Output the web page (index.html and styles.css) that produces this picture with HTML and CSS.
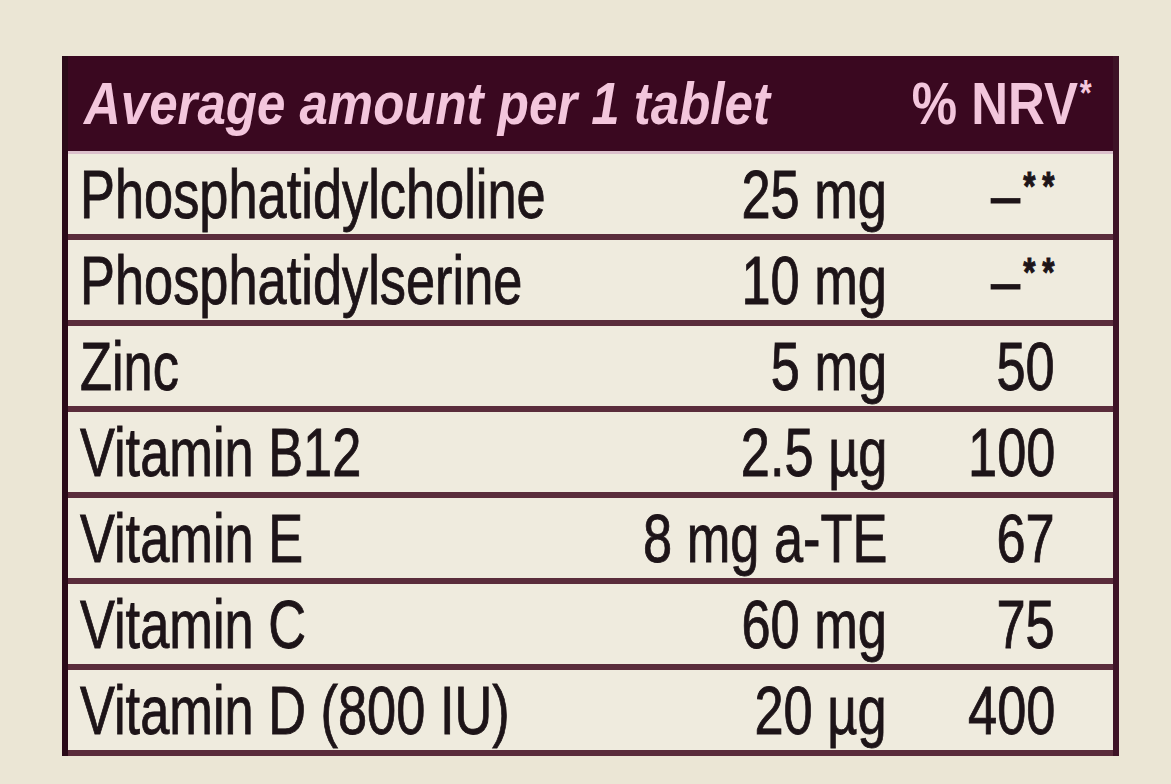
FILE: index.html
```html
<!DOCTYPE html>
<html lang="en">
<head>
  <meta charset="UTF-8">
  <meta name="viewport" content="width=device-width, initial-scale=1.0">
  <title>Nutrition Table</title>
  <link rel="stylesheet" href="styles.css">
</head>
<body>

  <div class="nutri-table">
    <div class="nutri-head">
      <span class="head-title">Average amount per 1 tablet</span>
      <span class="head-nrv">% NRV<sup>*</sup></span>
    </div>

    <div class="nutri-row">
      <span class="name">Phosphatidylcholine</span>
      <span class="amount">25 mg</span>
      <span class="nrv">–<sup>**</sup></span>
    </div>
    <div class="nutri-row">
      <span class="name">Phosphatidylserine</span>
      <span class="amount">10 mg</span>
      <span class="nrv">–<sup>**</sup></span>
    </div>
    <div class="nutri-row">
      <span class="name">Zinc</span>
      <span class="amount">5 mg</span>
      <span class="nrv">50</span>
    </div>
    <div class="nutri-row">
      <span class="name">Vitamin B12</span>
      <span class="amount">2.5 µg</span>
      <span class="nrv">100</span>
    </div>
    <div class="nutri-row">
      <span class="name">Vitamin E</span>
      <span class="amount">8 mg a-TE</span>
      <span class="nrv">67</span>
    </div>
    <div class="nutri-row">
      <span class="name">Vitamin C</span>
      <span class="amount">60 mg</span>
      <span class="nrv">75</span>
    </div>
    <div class="nutri-row">
      <span class="name">Vitamin D (800 IU)</span>
      <span class="amount">20 µg</span>
      <span class="nrv">400</span>
    </div>
  </div>

</body>
</html>
```

FILE: styles.css
```css
body {
  margin: 0;
  background-color: #ebe6d5;
  font-family: "Liberation Sans", Arial, sans-serif;
  color: #1d1418;
}

.nutri-table {
  width: 1045px;
  margin: 56px 0 0 62px;
  border-left: 6px solid #2a0a18;
  border-right: 6px solid #3e1326;
  background-color: #efebde;
}

/* header bar */
.nutri-head {
  height: 95px;
  background-color: #3a0820;
  border-bottom: 3px solid #dcc0cc;
  display: grid;
  grid-template-columns: minmax(0, 1fr) auto;
  align-items: center;
  padding: 0 21px 0 16px;
  color: #f3c6dc;
  font-weight: bold;
  font-size: 60px;
  line-height: 1;
  white-space: nowrap;
}

.head-title {
  display: inline-block;
  font-style: italic;
  transform: scaleX(0.85);
  transform-origin: left center;
  justify-self: start;
}

.head-nrv {
  display: inline-block;
  transform: scaleX(0.85);
  transform-origin: right center;
  justify-self: end;
}

.head-nrv sup {
  font-size: 0.6em;
  vertical-align: 0.5em;
  margin-left: 2px;
}

/* rows */
.nutri-row {
  display: grid;
  grid-template-columns: minmax(0, 1fr) 340px 168px;
  align-items: center;
  height: 80px;
  padding: 0 58px 0 12px;
  border-bottom: 6px solid #5a2c3b;
  font-size: 68px;
  line-height: 1;
  white-space: nowrap;
  -webkit-text-stroke: 0.9px #1d1418;
}

.name,
.amount,
.nrv {
  display: inline-block;
  transform: scaleX(0.77);
}

.name {
  justify-self: start;
  transform-origin: left center;
}

.amount,
.nrv {
  justify-self: end;
  transform-origin: right center;
}

.nrv sup {
  font-size: 0.6em;
  font-weight: bold;
  letter-spacing: 9px;
  vertical-align: 0.45em;
  margin-left: 4px;
  margin-right: -9px;
}
```
